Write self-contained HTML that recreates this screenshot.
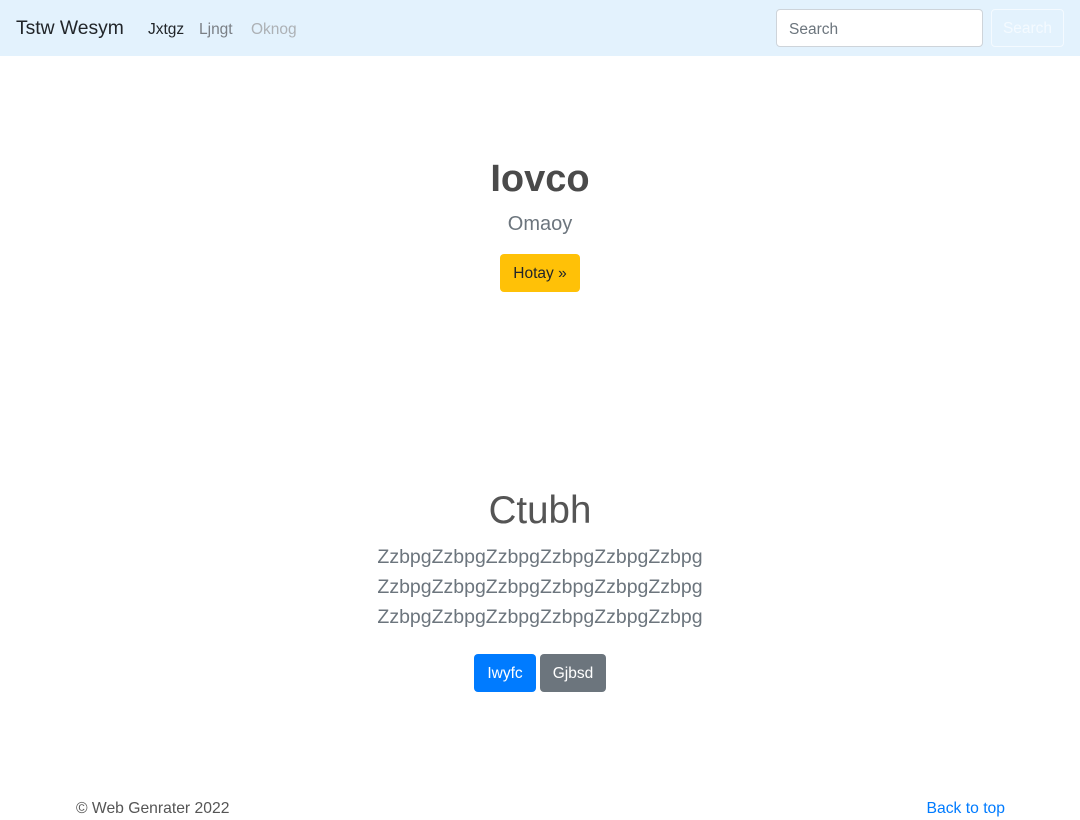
<!DOCTYPE html>
<html><head><style>
*{box-sizing:border-box;margin:0;padding:0}
body{width:1080px;height:820px;font-family:"Liberation Sans",sans-serif;color:#212529;background:#fff;position:relative;overflow:hidden;font-size:16px}
nav{height:56px;background:#e3f2fd;position:relative}
.brand{position:absolute;left:16px;top:18px;font-size:19.3px;color:#212529}
.nl{position:absolute;top:21px;font-size:15.5px}
.inp{position:absolute;left:776px;top:9px;width:207px;height:38px;border:1px solid #ced4da;border-radius:4px;background:#fff;padding:11px 12px 0;color:#6c757d;font-size:15.5px}
.sb{position:absolute;left:991px;top:9px;width:73px;height:38px;border:1px solid #f4faff;border-radius:4px;color:#f4faff;padding:10px 0 0;text-align:center;font-size:15.5px}
.c{position:absolute;left:0;width:1080px;text-align:center}
.btn{position:absolute;height:38px;border-radius:4px;font-size:15.5px;line-height:40px;text-align:center}
</style></head><body>
<nav>
<div class="brand">Tstw Wesym</div>
<div class="nl" style="left:148px;color:#212529">Jxtgz</div>
<div class="nl" style="left:199px;color:#7a7f85">Ljngt</div>
<div class="nl" style="left:251px;color:#adb1b5">Oknog</div>
<div class="inp">Search</div>
<div class="sb">Search</div>
</nav>
<div class="c" style="top:158px;font-size:38px;font-weight:bold;color:#4a4a4a">Iovco</div>
<div class="c" style="top:213px;font-size:20px;color:#6c757d">Omaoy</div>
<div class="btn" style="left:500px;top:254px;width:80px;background:#ffc107;color:#212529">Hotay »</div>
<div class="c" style="top:489px;font-size:38.5px;font-weight:300;color:#555">Ctubh</div>
<div class="c" style="top:542px;font-size:19.5px;line-height:30px;color:#6c757d">ZzbpgZzbpgZzbpgZzbpgZzbpgZzbpg<br>ZzbpgZzbpgZzbpgZzbpgZzbpgZzbpg<br>ZzbpgZzbpgZzbpgZzbpgZzbpgZzbpg</div>
<div class="btn" style="left:474px;top:654px;width:62px;background:#007bff;color:#fff">Iwyfc</div>
<div class="btn" style="left:540px;top:654px;width:66px;background:#6c757d;color:#fff">Gjbsd</div>
<div style="position:absolute;left:76px;top:800px;color:#555;font-size:15.7px">© Web Genrater 2022</div>
<div style="position:absolute;right:75px;top:800px;color:#007bff;font-size:15.7px">Back to top</div>
</body></html>
